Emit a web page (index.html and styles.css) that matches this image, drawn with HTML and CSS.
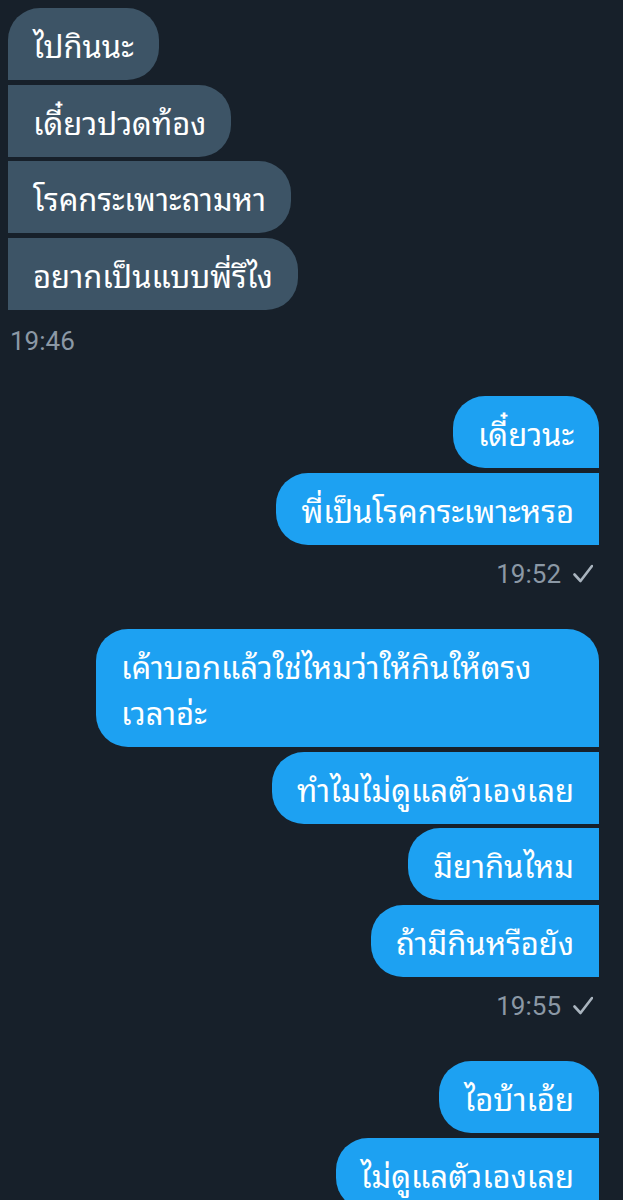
FILE: index.html
```html
<!DOCTYPE html>
<html lang="th">
<head>
<meta charset="utf-8">
<link rel="stylesheet" href="styles.css">
</head>
<body>
<div class="chat">
  <div class="group recv">
    <div class="bubble first">ไปกินนะ</div>
    <div class="bubble">เดี๋ยวปวดท้อง</div>
    <div class="bubble">โรคกระเพาะถามหา</div>
    <div class="bubble last">อยากเป็นแบบพี่รึไง</div>
    <div class="time">19:46</div>
  </div>
  <div class="group sent">
    <div class="bubble first">เดี๋ยวนะ</div>
    <div class="bubble last">พี่เป็นโรคกระเพาะหรอ</div>
    <div class="time">19:52 <svg class="check" viewBox="0 0 20 20" width="20" height="20"><path d="M1.5 10.5 L7.5 17 L19 2" fill="none" stroke="currentColor" stroke-width="2.6" stroke-linecap="round" stroke-linejoin="round"/></svg></div>
  </div>
  <div class="group sent">
    <div class="bubble first wide">เค้าบอกแล้วใช่ไหมว่าให้กินให้ตรง<br>เวลาอ่ะ</div>
    <div class="bubble">ทำไมไม่ดูแลตัวเองเลย</div>
    <div class="bubble">มียากินไหม</div>
    <div class="bubble last">ถ้ามีกินหรือยัง</div>
    <div class="time">19:55 <svg class="check" viewBox="0 0 20 20" width="20" height="20"><path d="M1.5 10.5 L7.5 17 L19 2" fill="none" stroke="currentColor" stroke-width="2.6" stroke-linecap="round" stroke-linejoin="round"/></svg></div>
  </div>
  <div class="group sent">
    <div class="bubble first">ไอบ้าเอ้ย</div>
    <div class="bubble">ไม่ดูแลตัวเองเลย</div>
  </div>
</div>
</body>
</html>
```
FILE: styles.css
```css
html, body {
  margin: 0;
  padding: 0;
  background: #17202a;
}
.chat {
  padding: 8px 24px 0 8px;
  display: flex;
  flex-direction: column;
  gap: 37px;
  height: 1200px;
  overflow: hidden;
  box-sizing: border-box;
}
.group {
  display: flex;
  flex-direction: column;
  gap: 4.5px;
}
.recv { align-items: flex-start; }
.sent { align-items: flex-end; }
.bubble {
  font-family: "Noto Sans Thai Looped", "Loma", "Waree", "Garuda", "Noto Sans Thai", "Noto Sans", sans-serif;
  font-size: 31px;
  line-height: 46px;
  color: #ffffff;
  padding: 13px 25px;
  border-radius: 32px;
  white-space: nowrap;
}
.recv .bubble {
  background: #3d5466;
  border-top-left-radius: 0;
  border-bottom-left-radius: 0;
}
.recv .bubble.first { border-top-left-radius: 32px; }
.sent .bubble {
  background: #1da1f2;
  border-top-right-radius: 0;
  border-bottom-right-radius: 0;
}
.sent .bubble.first { border-top-right-radius: 32px; }
.bubble.wide { width: 453px; }
.time {
  font-family: Roboto, "Liberation Sans", sans-serif;
  font-size: 26px;
  line-height: 36px;
  color: #8b98a5;
  margin-top: 7px;
  display: flex;
  align-items: center;
  gap: 12px;
}
.recv .time { padding-left: 2px; margin-top: 9px; }
.sent .time { padding-right: 6px; }
.check { color: #a9b4be; }
```
